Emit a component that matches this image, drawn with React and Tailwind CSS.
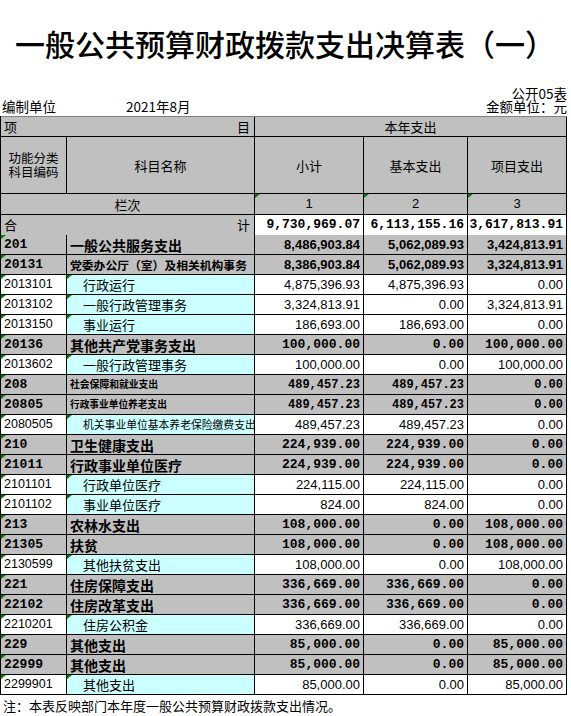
import React from 'react';

const cjk = "font-['Noto_Sans_CJK_SC','Noto_Sans_CJK_JP',sans-serif]";
const mono = "font-['Liberation_Mono','Noto_Sans_CJK_SC',monospace]";
const sans = "font-['Liberation_Sans','Noto_Sans_CJK_SC',sans-serif]";
const cols = 'grid grid-cols-[66px_188px_109px_104px_99px]';

// type: b = summary row (grey, bold), d = detail row (white / cyan)
const rows = [
  { code: '201', name: '一般公共服务支出', a: '8,486,903.84', b: '5,062,089.93', c: '3,424,813.91', type: 'b', ns: 'text-[14px]', num: `${sans} text-[13px]` },
  { code: '20131', name: '党委办公厅（室）及相关机构事务', a: '8,386,903.84', b: '5,062,089.93', c: '3,324,813.91', type: 'b', ns: 'text-[11.8px]', num: `${sans} text-[13px]` },
  { code: '2013101', name: '行政运行', a: '4,875,396.93', b: '4,875,396.93', c: '0.00', type: 'd' },
  { code: '2013102', name: '一般行政管理事务', a: '3,324,813.91', b: '0.00', c: '3,324,813.91', type: 'd' },
  { code: '2013150', name: '事业运行', a: '186,693.00', b: '186,693.00', c: '0.00', type: 'd' },
  { code: '20136', name: '其他共产党事务支出', a: '100,000.00', b: '0.00', c: '100,000.00', type: 'b', ns: 'text-[14px]', num: `${mono} text-[13px]` },
  { code: '2013602', name: '一般行政管理事务', a: '100,000.00', b: '0.00', c: '100,000.00', type: 'd' },
  { code: '208', name: '社会保障和就业支出', a: '489,457.23', b: '489,457.23', c: '0.00', type: 'b', ns: 'text-[9.8px]', num: `${mono} text-[12px]` },
  { code: '20805', name: '行政事业单位养老支出', a: '489,457.23', b: '489,457.23', c: '0.00', type: 'b', ns: 'text-[9.7px]', num: `${mono} text-[12px]` },
  { code: '2080505', name: '机关事业单位基本养老保险缴费支出', a: '489,457.23', b: '489,457.23', c: '0.00', type: 'd', ns: 'text-[10.8px]' },
  { code: '210', name: '卫生健康支出', a: '224,939.00', b: '224,939.00', c: '0.00', type: 'b', ns: 'text-[14px]', num: `${mono} text-[13px]` },
  { code: '21011', name: '行政事业单位医疗', a: '224,939.00', b: '224,939.00', c: '0.00', type: 'b', ns: 'text-[14px]', num: `${mono} text-[13px]` },
  { code: '2101101', name: '行政单位医疗', a: '224,115.00', b: '224,115.00', c: '0.00', type: 'd' },
  { code: '2101102', name: '事业单位医疗', a: '824.00', b: '824.00', c: '0.00', type: 'd' },
  { code: '213', name: '农林水支出', a: '108,000.00', b: '0.00', c: '108,000.00', type: 'b', ns: 'text-[14px]', num: `${mono} text-[13px]` },
  { code: '21305', name: '扶贫', a: '108,000.00', b: '0.00', c: '108,000.00', type: 'b', ns: 'text-[14px]', num: `${mono} text-[13px]` },
  { code: '2130599', name: '其他扶贫支出', a: '108,000.00', b: '0.00', c: '108,000.00', type: 'd' },
  { code: '221', name: '住房保障支出', a: '336,669.00', b: '336,669.00', c: '0.00', type: 'b', ns: 'text-[14px]', num: `${mono} text-[13px]` },
  { code: '22102', name: '住房改革支出', a: '336,669.00', b: '336,669.00', c: '0.00', type: 'b', ns: 'text-[14px]', num: `${mono} text-[13px]` },
  { code: '2210201', name: '住房公积金', a: '336,669.00', b: '336,669.00', c: '0.00', type: 'd' },
  { code: '229', name: '其他支出', a: '85,000.00', b: '0.00', c: '85,000.00', type: 'b', ns: 'text-[14px]', num: `${mono} text-[13px]` },
  { code: '22999', name: '其他支出', a: '85,000.00', b: '0.00', c: '85,000.00', type: 'b', ns: 'text-[14px]', num: `${mono} text-[13px]` },
  { code: '2299901', name: '其他支出', a: '85,000.00', b: '0.00', c: '85,000.00', type: 'd' }
];

const Mark = () => (
  <span className="absolute top-0 left-0 w-0 h-0 border-t-[4px] border-r-[5px] border-t-[#008000] border-r-transparent" />
);

const cell = 'relative border-r border-b border-black flex items-center overflow-hidden whitespace-nowrap';

const DataRow = ({ r }) => {
  const bold = r.type === 'b';
  const bg = bold ? 'bg-[#c0c0c0]' : 'bg-white';
  const numCls = bold
    ? `${r.num} font-bold justify-end pr-[3px]`
    : `${sans} text-[13px] justify-end pr-[3px]`;
  return (
    <div className={`${cols} h-[20px] text-black`}>
      <div className={`${cell} ${bg} pl-[3px] ${bold ? `${mono} font-bold text-[13px]` : `${sans} text-[12.5px]`}`}>
        <Mark />
        {r.code}
      </div>
      {bold ? (
        <div className={`${cell} bg-[#c0c0c0] pl-[3px] ${cjk} font-bold ${r.ns} leading-none`}>
          {r.name}
        </div>
      ) : (
        <div className={`${cell} bg-[#ccffff] pl-[16px] ${cjk} ${r.ns || 'text-[13px]'} leading-none`}>
          <Mark />
          {r.name}
        </div>
      )}
      <div className={`${cell} ${bg} ${numCls}`}>{r.a}</div>
      <div className={`${cell} ${bg} ${numCls}`}>{r.b}</div>
      <div className={`${cell} ${bg} ${numCls}`}>{r.c}</div>
    </div>
  );
};

const App = () => {
  return (
    <div className={`w-[571px] h-[716px] bg-white overflow-hidden text-black ${cjk}`}>
      {/* Title */}
      <div className="h-[86px] flex items-center pl-[15px]">
        <h1 className="text-[30px] leading-none font-medium">一般公共预算财政拨款支出决算表（一）</h1>
      </div>
      <div className="mt-[1px] w-[567px] text-[13.5px] leading-[13px]">
        <div className="h-[13px] text-right">公开05表</div>
        <div className="h-[13px] flex items-center">
          <span className="w-[126px] pl-[2px]">编制单位</span>
          <span>2021年8月</span>
          <span className="ml-auto">金额单位：元</span>
        </div>
      </div>
      <div className="h-[3px]" />

      {/* Table */}
      <div className="w-[567px] border-l border-black text-[13px]">
        <div className={`${cols} h-[21px] bg-[#c0c0c0] border-t border-[#808080]`}>
          <div className="col-span-2 border-r border-b border-black flex items-center justify-between pl-[3px] pr-[4px] leading-none">
            <span>项</span>
            <span>目</span>
          </div>
          <div className="col-span-3 border-r border-b border-black flex items-center justify-center leading-none">
            本年支出
          </div>
        </div>
        <div className={`${cols} h-[57px] bg-[#c0c0c0]`}>
          <div className="border-r border-b border-black flex flex-col items-center justify-center gap-[1px] text-[12.5px] leading-none">
            <span>功能分类</span>
            <span>科目编码</span>
          </div>
          <div className="border-r border-b border-black flex items-center justify-center leading-none">科目名称</div>
          <div className="border-r border-b border-black flex items-center justify-center leading-none">小计</div>
          <div className="border-r border-b border-black flex items-center justify-center leading-none">基本支出</div>
          <div className="border-r border-b border-black flex items-center justify-center leading-none">项目支出</div>
        </div>
        <div className={`${cols} h-[21px] bg-[#c0c0c0]`}>
          <div className="col-span-2 border-r border-b border-black flex items-center justify-center leading-none">栏次</div>
          {['1', '2', '3'].map(n => (
            <div key={n} className={`relative border-r border-b border-black flex items-center justify-center ${sans} text-[13px]`}>
              <Mark />
              {n}
            </div>
          ))}
        </div>
        <div className={`${cols} h-[20px]`}>
          <div className="col-span-2 bg-[#c0c0c0] border-r border-b border-black flex items-center justify-between pl-[3px] pr-[4px] leading-none">
            <span>合</span>
            <span>计</span>
          </div>
          {['9,730,969.07', '6,113,155.16', '3,617,813.91'].map(v => (
            <div key={v} className={`bg-white border-r border-b border-black flex items-center justify-end pr-[3px] ${mono} font-bold text-[13px]`}>
              {v}
            </div>
          ))}
        </div>
        {rows.map(r => (
          <DataRow key={r.code} r={r} />
        ))}
      </div>

      <div className="h-[21px] flex items-center pl-[3px] text-[13px] leading-none">
        注：本表反映部门本年度一般公共预算财政拨款支出情况。
      </div>
    </div>
  );
};

export default App;
